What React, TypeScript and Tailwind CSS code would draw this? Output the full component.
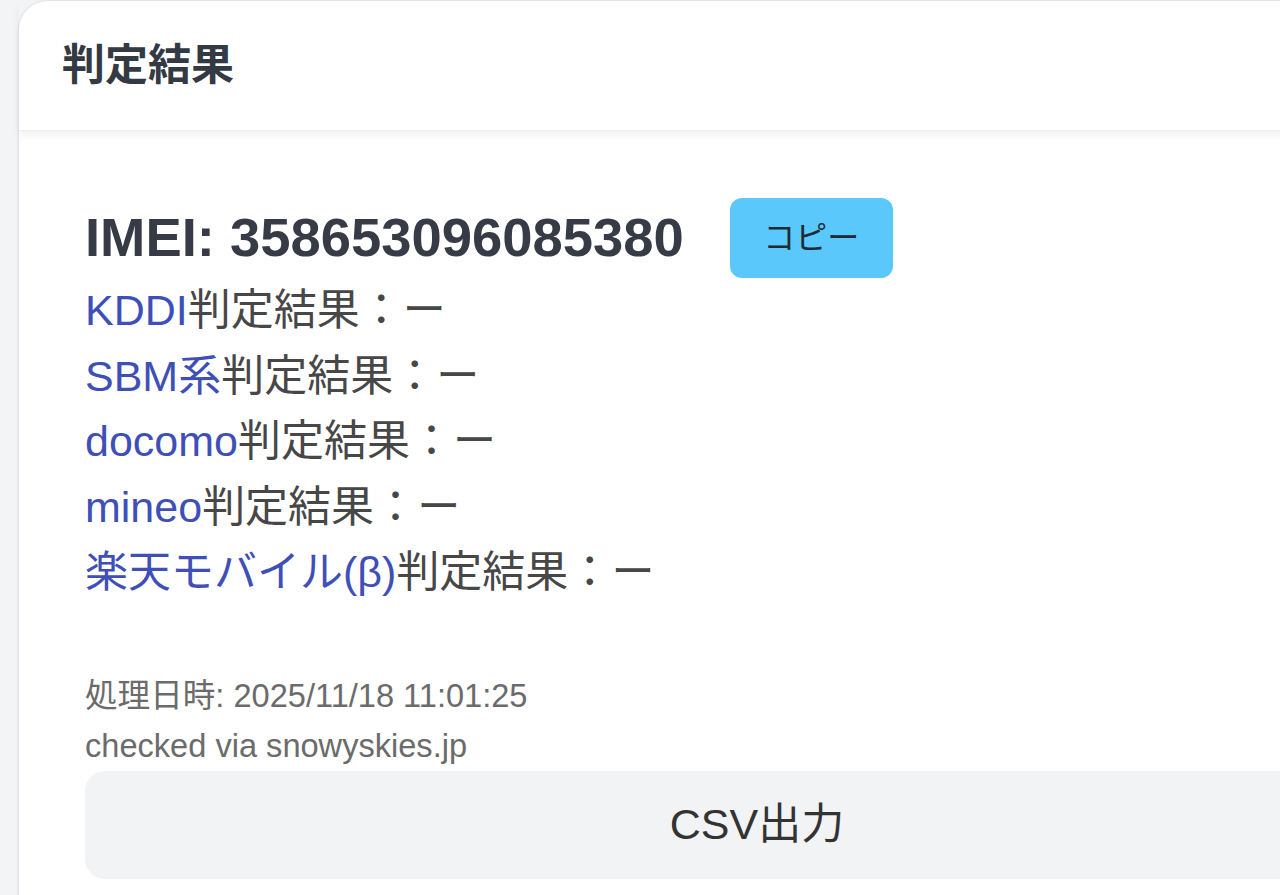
import React from "react";

const rows = [
  { label: "KDDI", value: "ー" },
  { label: "SBM系", value: "ー" },
  { label: "docomo", value: "ー" },
  { label: "mineo", value: "ー" },
  { label: "楽天モバイル(β)", value: "ー" },
];

export default function App() {
  return (
    <div
      className="w-[1280px] h-[895px] overflow-hidden bg-[#f3f4f6] pl-[18px]"
      style={{ fontFamily: '"Liberation Sans", Arial, "Noto Sans CJK JP", sans-serif' }}
    >
      <div className="w-[1500px] h-[1000px] bg-white rounded-tl-[30px] border border-[#e5e7eb] shadow-sm">
        <div className="h-[130px] flex items-center pl-[43px] shadow-[0_4px_8px_rgba(0,0,0,0.06)] border-b border-[#ececec] relative">
          <h2 className="text-[43px] font-bold text-[#333a44] leading-none">判定結果</h2>
        </div>
        <div className="pl-[66px] pt-[67px] w-[1410px]">
          <div className="flex items-center h-[80px]">
            <div className="text-[54.4px] font-bold text-[#363b45] leading-none">IMEI: 358653096085380</div>
            <button className="ml-[46px] w-[163px] h-[80px] rounded-[12px] bg-[#5ac8fa] text-[32px] text-[#1f2937] flex items-center justify-center">
              コピー
            </button>
          </div>
          <div className="text-[43px] leading-[65.5px]">
            {rows.map((r) => (
              <div key={r.label} className="text-[#474747]">
                <span className="text-[#3f4fb8]">{r.label}</span>判定結果：{r.value}
              </div>
            ))}
          </div>
          <div className="mt-[65px] text-[32.6px] leading-[50px] text-[#6b6b6b]">
            <div>処理日時: 2025/11/18 11:01:25</div>
            <div>checked via snowyskies.jp</div>
          </div>
          <button className="w-full h-[108px] rounded-[20px] bg-[#f2f3f5] text-[43px] text-[#333] flex items-center justify-center">
            CSV出力
          </button>
        </div>
      </div>
    </div>
  );
}
